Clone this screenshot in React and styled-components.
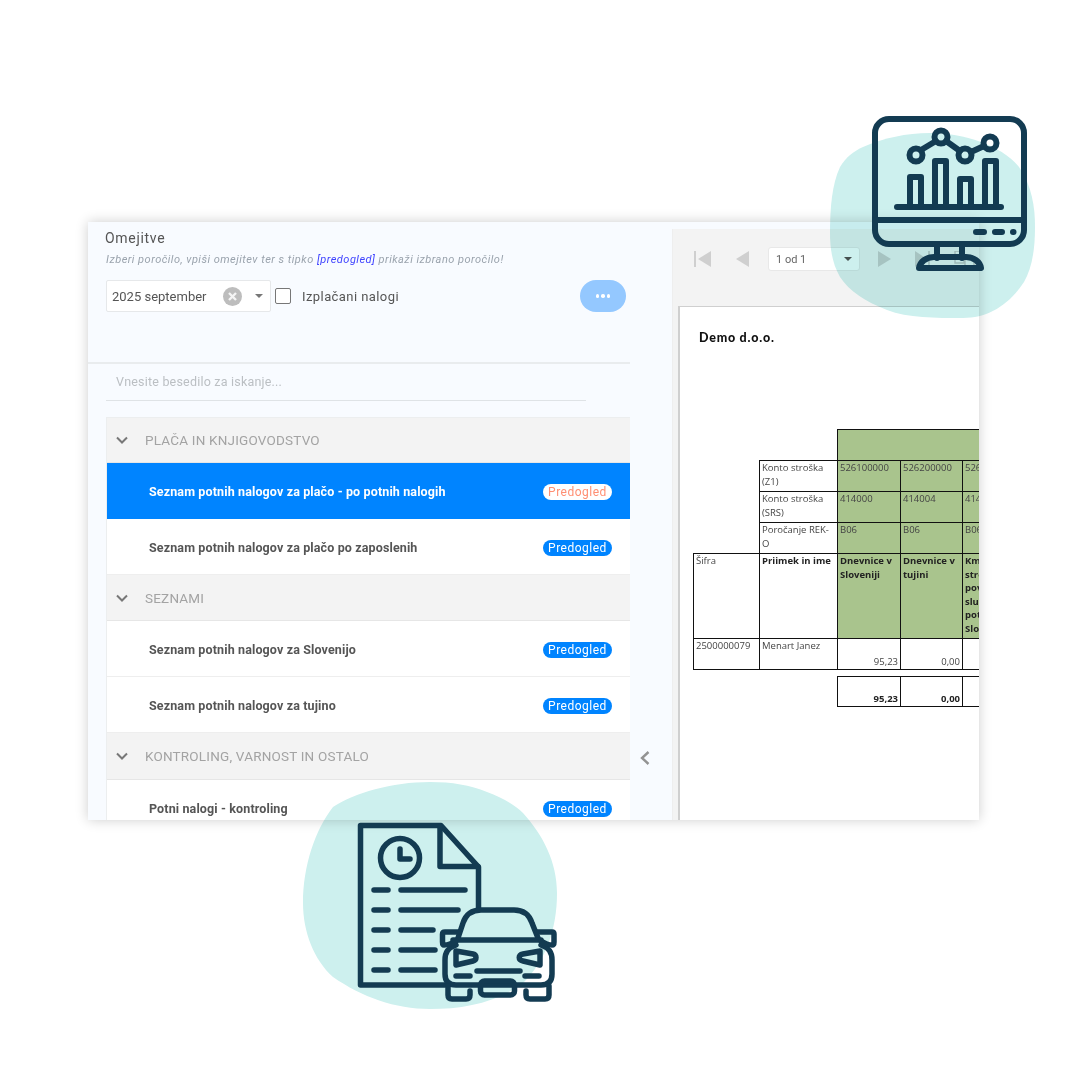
import React from "react";
import styled, { createGlobalStyle } from "styled-components";

const Global = createGlobalStyle`
  html, body { margin: 0; padding: 0; background: #fff; }
  * { box-sizing: border-box; }
`;

const Canvas = styled.div`
  position: relative;
  width: 1080px;
  height: 1080px;
  padding: 222px 0 0 88px;
  overflow: hidden;
  background: #fff;
  font-family: Roboto, "Liberation Sans", sans-serif;
`;
const AppWindow = styled.div`
  display: flex;
  width: 891px;
  height: 598px;
  overflow: hidden;
  background: #f8fbff;
  box-shadow: 0 0 12px rgba(0, 0, 0, 0.2);
`;
const LeftPanel = styled.div`
  display: flex;
  flex-direction: column;
  width: 542px;
  flex: none;
`;
const Limits = styled.div`
  height: 142px;
  flex: none;
  padding: 8px 4px 0 18px;
  border-bottom: 2px solid #e9ecee;
`;
const Title = styled.div`
  margin-left: -1px;
  font-size: 14px;
  line-height: 16px;
  letter-spacing: 0.7px;
  color: #555;
`;
const Hint = styled.div`
  margin-top: 7px;
  font-size: 11px;
  line-height: 14px;
  font-style: italic;
  letter-spacing: 0.48px;
  color: #9aa3ad;
`;
const HintLink = styled.span`
  color: #3f43ff;
`;
const FilterRow = styled.div`
  display: flex;
  align-items: center;
  margin-top: 13px;
  height: 32px;
`;
const DateSelect = styled.div`
  display: flex;
  align-items: center;
  width: 165px;
  height: 32px;
  padding: 0 7px 0 5px;
  background: #fff;
  border: 1px solid #e6e8ea;
  border-radius: 2px;
  font-size: 13px;
  color: #555;
`;
const DateText = styled.span`
  flex: 1;
`;
const ClearBadge = styled.svg`
  width: 19px;
  height: 19px;
  margin-right: 13px;
  flex: none;
`;
const Caret = styled.span`
  width: 0;
  height: 0;
  flex: none;
  border-left: 4px solid transparent;
  border-right: 4px solid transparent;
  border-top: 4px solid ${(p) => p.$color || "#777"};
`;
const CheckBox = styled.span`
  width: 16px;
  height: 16px;
  margin: 0 11px 0 4px;
  flex: none;
  border: 1.5px solid #777;
  border-radius: 2px;
  background: #fff;
`;
const CheckLabel = styled.span`
  flex: 1;
  font-size: 13px;
  letter-spacing: 0.42px;
  color: #555;
`;
const MoreButton = styled.button`
  display: flex;
  align-items: center;
  justify-content: center;
  gap: 2px;
  width: 46px;
  height: 32px;
  padding: 0;
  border: 0;
  border-radius: 16px;
  background: #94c8ff;
`;
const Dot = styled.span`
  width: 3.5px;
  height: 3.5px;
  border-radius: 50%;
  background: #fff;
`;
const SearchWrap = styled.div`
  flex: none;
  width: 480px;
  height: 37px;
  margin-left: 18px;
  padding: 9px 0 0 10px;
  border-bottom: 1px solid #dfe3e6;
  font-size: 12.5px;
  line-height: 18px;
  letter-spacing: 0.2px;
  color: #bbbfc3;
`;
const List = styled.div`
  margin: 16px 0 0 18px;
  width: 524px;
  border-top: 1px solid #eceeef;
  border-left: 1px solid #eceeef;
`;
const Group = styled.div`
  display: flex;
  align-items: center;
  height: ${(p) => p.$h}px;
  padding-left: 8px;
  background: #f3f3f3;
  border-bottom: 1px solid #e6e6e6;
  font-size: 13.5px;
  letter-spacing: 0.2px;
  color: #a3a3a3;
`;
const GroupChevron = styled.svg`
  width: 14px;
  height: 14px;
  margin-right: 16px;
  flex: none;
`;
const Row = styled.div`
  display: flex;
  align-items: center;
  justify-content: space-between;
  height: 56px;
  padding: 1px 18px 0 42px;
  background: ${(p) => (p.$active ? "#0084ff" : "#fff")};
  border-bottom: 1px solid ${(p) => (p.$active ? "#0084ff" : "#eeeeee")};
  font-size: 12.5px;
  font-weight: 700;
  letter-spacing: 0.13px;
  color: ${(p) => (p.$active ? "#fff" : "#555")};
`;
const Badge = styled.span`
  width: 69px;
  height: 16px;
  margin-top: 1px;
  flex: none;
  text-align: center;
  border-radius: 8px;
  font-size: 12px;
  font-weight: 400;
  line-height: 16px;
  letter-spacing: 0.5px;
  background: ${(p) => (p.$active ? "#fff" : "#0084ff")};
  color: ${(p) => (p.$active ? "#ff8f73" : "#fff")};
`;
const Gutter = styled.div`
  width: 42px;
  flex: none;
  padding: 528px 0 0 8px;
`;
const CollapseIcon = styled.svg`
  display: block;
  width: 14px;
  height: 16px;
`;
const ReportPanel = styled.div`
  flex: 1;
  min-width: 0;
  margin-top: 7px;
  background: #f3f3f3;
  overflow: hidden;
  box-shadow: inset 1px 0 0 #eeeeee;
`;
const Toolbar = styled.div`
  display: flex;
  align-items: center;
  height: 60px;
  padding-left: 22px;
`;
const NavIcon = styled.svg`
  flex: none;
  height: 16px;
  width: ${(p) => p.$w}px;
  margin-right: ${(p) => p.$mr}px;
`;
const PageSelect = styled.div`
  display: flex;
  align-items: center;
  justify-content: space-between;
  flex: none;
  width: 92px;
  height: 24px;
  margin-right: 18px;
  padding: 0 7px;
  background: #fff;
  border: 1px solid #e8e8e8;
  border-radius: 3px;
  font-size: 11px;
  color: #666;
`;
const Sheet = styled.div`
  width: 360px;
  height: 520px;
  margin: 17px 0 0 6px;
  padding: 24px 0 0 13px;
  background: #fff;
  border: 1px solid #cfcfcf;
  border-width: 1px 0 0 2px;
`;
const Company = styled.div`
  margin-left: 6px;
  height: 98px;
  font-family: Lato, "Liberation Sans", sans-serif;
  font-size: 12.5px;
  font-weight: 900;
  line-height: 14px;
  letter-spacing: 0.75px;
  color: #111;
`;
const ReportTable = styled.table`
  table-layout: fixed;
  width: 330px;
  border-collapse: collapse;
  font-family: "Open Sans", "Liberation Sans", sans-serif;
  font-size: 9.5px;
  line-height: 13.5px;
  color: #444;
`;
const Cell = styled.td`
  padding: ${(p) => (p.$num ? "0 2px 1px" : "0 2px")};
  vertical-align: ${(p) => (p.$num ? "bottom" : "top")};
  text-align: ${(p) => (p.$num ? "right" : "left")};
  font-weight: ${(p) => (p.$bold ? 700 : 400)};
  color: ${(p) => (p.$bold ? "#222" : "#444")};
  background: ${(p) => (p.$green ? "#a9c48d" : "transparent")};
  border: ${(p) => (p.$plain ? "0" : "1px solid #111")};
  overflow: hidden;
  white-space: ${(p) => (p.$nowrap ? "nowrap" : "normal")};
`;
const Col = styled.col`
  width: ${(p) => p.$w}px;
`;
const TableRow = styled.tr`
  height: ${(p) => p.$h}px;
`;
const Overlay = styled.div`
  position: absolute;
  left: ${(p) => p.$x}px;
  top: ${(p) => p.$y}px;
  width: ${(p) => p.$w}px;
  height: ${(p) => p.$h}px;
  pointer-events: none;
`;
const BlobSvg = styled.svg`
  position: absolute;
  inset: 0;
  width: 100%;
  height: 100%;
  mix-blend-mode: multiply;
`;
const IconSvg = styled.svg`
  position: absolute;
  inset: 0;
  width: 100%;
  height: 100%;
  fill: none;
  stroke: #133b52;
  stroke-width: ${(p) => p.$stroke}px;
  stroke-linecap: round;
  stroke-linejoin: round;
`;

const Chevron = () => (
  <GroupChevron viewBox="0 0 14 14">
    <path d="M2 4.5 7 9.5 12 4.5" fill="none" stroke="#777" strokeWidth="2" />
  </GroupChevron>
);

const groups = [
  { title: "PLAČA IN KNJIGOVODSTVO", h: 45, rows: [
    { text: "Seznam potnih nalogov za plačo - po potnih nalogih", active: true },
    { text: "Seznam potnih nalogov za plačo po zaposlenih" },
  ]},
  { title: "SEZNAMI", h: 46, rows: [
    { text: "Seznam potnih nalogov za Slovenijo" },
    { text: "Seznam potnih nalogov za tujino" },
  ]},
  { title: "KONTROLING, VARNOST IN OSTALO", h: 47, rows: [
    { text: "Potni nalogi - kontroling" },
  ]},
];

const konto = [
  { label: "Konto stroška (Z1)", vals: ["526100000", "526200000", "526300000"] },
  { label: "Konto stroška (SRS)", vals: ["414000", "414004", "414100"] },
  { label: "Poročanje REK-O", vals: ["B06", "B06", "B06"] },
];

export default function App() {
  return (
    <Canvas>
      <Global />
      <AppWindow>
        <LeftPanel>
          <Limits>
            <Title>Omejitve</Title>
            <Hint>
              Izberi poročilo, vpiši omejitev ter s tipko <HintLink>[predogled]</HintLink> prikaži izbrano poročilo!
            </Hint>
            <FilterRow>
              <DateSelect>
                <DateText>2025 september</DateText>
                <ClearBadge viewBox="0 0 19 19">
                  <circle cx="9.5" cy="9.5" r="9.5" fill="#bdbdbd" />
                  <path d="M6 6 13 13M13 6 6 13" stroke="#f4f4f4" strokeWidth="2.4" />
                </ClearBadge>
                <Caret />
              </DateSelect>
              <CheckBox />
              <CheckLabel>Izplačani nalogi</CheckLabel>
              <MoreButton aria-label="več">
                <Dot /><Dot /><Dot />
              </MoreButton>
            </FilterRow>
          </Limits>
          <SearchWrap>Vnesite besedilo za iskanje...</SearchWrap>
          <List>
            {groups.map((g) => (
              <React.Fragment key={g.title}>
                <Group $h={g.h}>
                  <Chevron />
                  {g.title}
                </Group>
                {g.rows.map((r) => (
                  <Row key={r.text} $active={r.active}>
                    {r.text}
                    <Badge $active={r.active}>Predogled</Badge>
                  </Row>
                ))}
              </React.Fragment>
            ))}
          </List>
        </LeftPanel>
        <Gutter>
          <CollapseIcon viewBox="0 0 14 16">
            <path d="M10.5 2 4 8 10.5 14" fill="none" stroke="#939393" strokeWidth="2.4" />
          </CollapseIcon>
        </Gutter>
        <ReportPanel>
          <Toolbar>
            <NavIcon $w={17} $mr={25} viewBox="0 0 17 16">
              <path d="M0 0h2v16H0zM17 0v16L4 8z" fill="#cfcfcf" />
            </NavIcon>
            <NavIcon $w={13} $mr={19} viewBox="0 0 13 16">
              <path d="M13 0v16L0 8z" fill="#cfcfcf" />
            </NavIcon>
            <PageSelect>
              1 od 1
              <Caret $color="#555" />
            </PageSelect>
            <NavIcon $w={13} $mr={24} viewBox="0 0 13 16">
              <path d="M0 0v16L13 8z" fill="#cfcfcf" />
            </NavIcon>
            <NavIcon $w={15} $mr={23} viewBox="0 0 15 16">
              <path d="M0 0v16L12 8zM13 0h2v16h-2z" fill="#cfcfcf" />
            </NavIcon>
            <NavIcon $w={22} $mr={0} viewBox="0 0 22 16">
              <path d="M2 0h5l4 4v8H2zM12 6h5l4 4v6h-9z" fill="none" stroke="#c4c4c4" strokeWidth="1.4" />
            </NavIcon>
          </Toolbar>
          <Sheet>
            <Company>Demo d.o.o.</Company>
            <ReportTable>
              <colgroup>
                <Col $w={66} />
                <Col $w={78} />
                <Col $w={63} />
                <Col $w={62} />
                <Col $w={61} />
              </colgroup>
              <tbody>
                <TableRow $h={31}>
                  <Cell $plain colSpan={2} />
                  <Cell $green colSpan={3} />
                </TableRow>
                {konto.map((k) => (
                  <TableRow $h={31} key={k.label}>
                    <Cell $plain />
                    <Cell>{k.label}</Cell>
                    {k.vals.map((v, i) => (
                      <Cell $green $nowrap key={i}>{v}</Cell>
                    ))}
                  </TableRow>
                ))}
                <TableRow $h={85}>
                  <Cell>Šifra</Cell>
                  <Cell $bold>Priimek in ime</Cell>
                  <Cell $green $bold>Dnevnice v Sloveniji</Cell>
                  <Cell $green $bold>Dnevnice v tujini</Cell>
                  <Cell $green $bold $nowrap>
                    Km<br />stroški<br />povračilo<br />službenih<br />potovanj<br />Slovenija
                  </Cell>
                </TableRow>
                <TableRow $h={31}>
                  <Cell>2500000079</Cell>
                  <Cell>Menart Janez</Cell>
                  <Cell $num>95,23</Cell>
                  <Cell $num>0,00</Cell>
                  <Cell $num />
                </TableRow>
                <TableRow $h={7}>
                  <Cell $plain colSpan={5} />
                </TableRow>
                <TableRow $h={30}>
                  <Cell $plain colSpan={2} />
                  <Cell $num $bold>95,23</Cell>
                  <Cell $num $bold>0,00</Cell>
                  <Cell $num $bold />
                </TableRow>
              </tbody>
            </ReportTable>
          </Sheet>
        </ReportPanel>
      </AppWindow>

      <Overlay $x={825} $y={110} $w={215} $h={215}>
        <BlobSvg viewBox="825 110 215 215">
          <path
            d="M930 133C965 133 1002 146 1019 167C1032 186 1035 207 1035 227C1035 250 1032 268 1024 282C1009 305 988 318 963 318C935 318 908 318 887 310C866 302 849 291 840 277C832 263 830 248 830 233C830 208 832 184 840 167C846 157 854 151 863 147C884 138 906 133 930 133Z"
            fill="#cdf0ee"
          />
        </BlobSvg>
        <IconSvg $stroke={6} viewBox="825 110 215 215">
          <rect x="875" y="119" width="149" height="125" rx="14" />
          <path d="M875 220H1024" />
          <path d="M976 232H984M995 232H1002" />
          <path d="M1013 232H1013.500" />
          <path d="M937 245V258M962 245V258" />
          <path d="M919 268C920 262 926 257 934 257H966C974 257 980 262 981 268Z" />
          <path d="M897 207H1001" />
          <path d="M910 205V177H921V205M935 205V161H946V205M960 205V179H971V205M985 205V161H996V205" />
          <circle cx="916" cy="155" r="6.500" />
          <circle cx="941" cy="137" r="6.500" />
          <circle cx="965" cy="155" r="6.500" />
          <circle cx="990" cy="143" r="6.500" />
          <path d="M921 150 936 141M946 141 960 151M971 152 984 146" />
        </IconSvg>
      </Overlay>

      <Overlay $x={295} $y={775} $w={270} $h={240}>
        <BlobSvg viewBox="295 775 270 240">
          <path
            d="M430 782C452 782 470 785 487 792C503 798 515 805 523 813C543 835 557 862 557 893C557 930 545 962 523 983C498 1002 464 1009 430 1009C395 1009 362 997 333 977C314 960 303 932 303 903C303 866 315 830 333 807C354 793 392 782 430 782Z"
            fill="#cdf0ee"
          />
        </BlobSvg>
        <IconSvg $stroke={5.5} viewBox="295 775 270 240">
          <path d="M445 985H360.500V825.500H441L478.500 867V908" />
          <path d="M440 827V866.500H478" />
          <circle cx="400" cy="858" r="19.500" />
          <path d="M400 849V859H410" />
          <path d="M374 890H388M401 890H465M374 910H388M401 910H458M374 930H388M401 930H433M374 950H388M401 950H435M374 970H388M401 970H435" />
          <path d="M458 938L463 923C466 914 472 910 481 910H514C523 910 529 914 532 923L538 938" />
          <path d="M453 940H541" />
          <path d="M456 945C448 948 445 952 445 960V974Q445 985 456 985H541Q552 985 552 974V960C552 952 549 948 541 945" />
          <path d="M456 941C451 944 448 945 444 945Q442.500 945 442.500 942V934Q442.500 932 445 932H459" />
          <path d="M541 941C546 944 549 945 552 945Q554 945 554 942V934Q554 932 552 932H537" />
          <path d="M456 951 473 954C477 955 477 960 473 961L456 965Z" />
          <path d="M540 951 523 954C518 955 518 960 523 961L540 965Z" />
          <path d="M477 971H520M456 976H470M525 976H539" />
          <rect x="480.500" y="981" width="34" height="14" rx="4" />
          <path d="M448 986V995Q448 999 452 999H466Q470 999 470 995V991" />
          <path d="M526 991V995Q526 999 530 999H545Q549 999 549 995V986" />
        </IconSvg>
      </Overlay>
    </Canvas>
  );
}
